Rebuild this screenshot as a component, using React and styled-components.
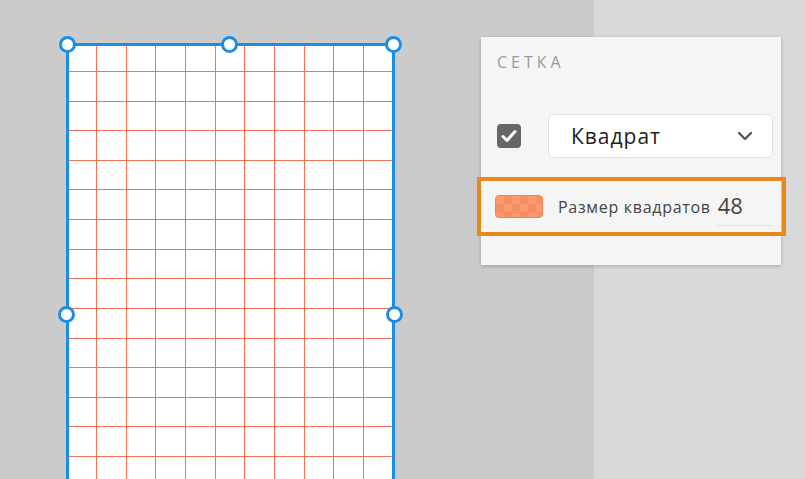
import React from 'react';
import styled, { createGlobalStyle } from 'styled-components';

const GlobalStyle = createGlobalStyle`
  html, body { margin: 0; padding: 0; }
  body {
    width: 805px;
    height: 479px;
    overflow: hidden;
    font-family: "Open Sans", "Liberation Sans", Arial, sans-serif;
  }
`;

const Page = styled.div`
  position: relative;
  width: 805px;
  height: 479px;
  display: grid;
  grid-template-columns: 594px 1fr;
  overflow: hidden;
`;

const Canvas = styled.div`
  background: #cbcbcb;
  padding: 43px 0 0 66px;
`;

const Side = styled.div`
  background: #d9d9d9;
`;

const Artboard = styled.div`
  position: relative;
  width: 323px;
  height: 460px;
  border: 3px solid #1b8de4;
  border-bottom: none;
  background-color: #fff;
`;

const GridLines = styled.svg`
  display: block;
`;

const Handle = styled.span`
  position: absolute;
  width: 11px;
  height: 11px;
  border-radius: 50%;
  background: #fff;
  border: 3px solid #1b8de4;
  left: ${({ x }) => x}px;
  top: ${({ y }) => y}px;
`;

const Panel = styled.div`
  position: absolute;
  left: 481px;
  top: 37px;
  width: 300px;
  height: 228px;
  background: #f5f5f5;
  box-shadow: 0 1px 4px rgba(0, 0, 0, 0.22);
  box-sizing: border-box;
  padding: 14px 0 0 16px;
`;

const Title = styled.div`
  font-size: 16px;
  letter-spacing: 4px;
  color: #9a9a9a;
  height: 22px;
`;

const TypeRow = styled.div`
  display: flex;
  align-items: center;
  gap: 27px;
  margin-top: 41px;
`;

const Check = styled.span`
  width: 24px;
  height: 24px;
  border-radius: 4px;
  background: #666;
  display: flex;
  align-items: center;
  justify-content: center;
`;

const Select = styled.div`
  width: 225px;
  height: 44px;
  box-sizing: border-box;
  background: #fff;
  border: 1px solid #e2e2e2;
  border-radius: 6px;
  display: flex;
  align-items: center;
  justify-content: space-between;
  padding: 0 19px 0 22px;
  font-size: 21px;
  letter-spacing: 1px;
  color: #222;
`;

const Highlight = styled.div`
  margin: 19px 0 0 -20px;
  width: 309px;
  height: 59px;
  box-sizing: border-box;
  border: 4px solid #e8891b;
  display: flex;
  align-items: center;
  padding-left: 14px;
`;

const Swatch = styled.span`
  width: 48px;
  height: 23px;
  border-radius: 4px;
  box-sizing: border-box;
  border: 1px solid #e98660;
  background-color: #fd9a6d;
  background-image: conic-gradient(#f69064 25%, transparent 0 50%, #f69064 0 75%, transparent 0);
  background-size: 16px 16px;
`;

const Label = styled.span`
  font-size: 16px;
  letter-spacing: 0.7px;
  color: #444;
  margin-left: 15px;
  white-space: nowrap;
`;

const Value = styled.span`
  margin-left: 5px;
  width: 57px;
  height: 38px;
  box-sizing: border-box;
  padding: 4px 0 0 2px;
  line-height: 26px;
  border-bottom: 1px solid #e4e4e4;
  font-size: 22px;
  color: #444;
`;

const cols = Array.from({ length: 11 }, (_, k) => Math.round(27 + 29.66 * k));
const rows = Array.from({ length: 15 }, (_, k) => Math.round(25 + 29.62 * k));

export default function App() {
  return (
    <>
      <GlobalStyle />
      <Page>
        <Canvas>
          <Artboard>
            <GridLines width="323" height="433" shapeRendering="crispEdges">
              {cols.map((x) => (
                <line key={'c' + x} x1={x + 0.5} y1="0" x2={x + 0.5} y2="433" stroke="#f37358" strokeWidth="1" />
              ))}
              {rows.map((y) => (
                <line key={'r' + y} x1="0" y1={y + 0.5} x2="323" y2={y + 0.5} stroke="#f37358" strokeWidth="1" />
              ))}
            </GridLines>
            <Handle x={-10} y={-10} />
            <Handle x={152} y={-10} />
            <Handle x={316} y={-10} />
            <Handle x={-11} y={260} />
            <Handle x={317} y={260} />
          </Artboard>
        </Canvas>
        <Side />
        <Panel>
          <Title>СЕТКА</Title>
          <TypeRow>
            <Check>
              <svg width="16" height="14" viewBox="0 0 16 14">
                <path d="M2 7.5 L6 11.5 L14 2.5" fill="none" stroke="#fff" strokeWidth="3" strokeLinecap="round" strokeLinejoin="round" />
              </svg>
            </Check>
            <Select>
              <span>Квадрат</span>
              <svg width="16" height="10" viewBox="0 0 16 10">
                <path d="M2 2 L8 8 L14 2" fill="none" stroke="#555" strokeWidth="2.4" strokeLinecap="round" strokeLinejoin="round" />
              </svg>
            </Select>
          </TypeRow>
          <Highlight>
            <Swatch />
            <Label>Размер квадратов</Label>
            <Value>48</Value>
          </Highlight>
        </Panel>
      </Page>
    </>
  );
}
